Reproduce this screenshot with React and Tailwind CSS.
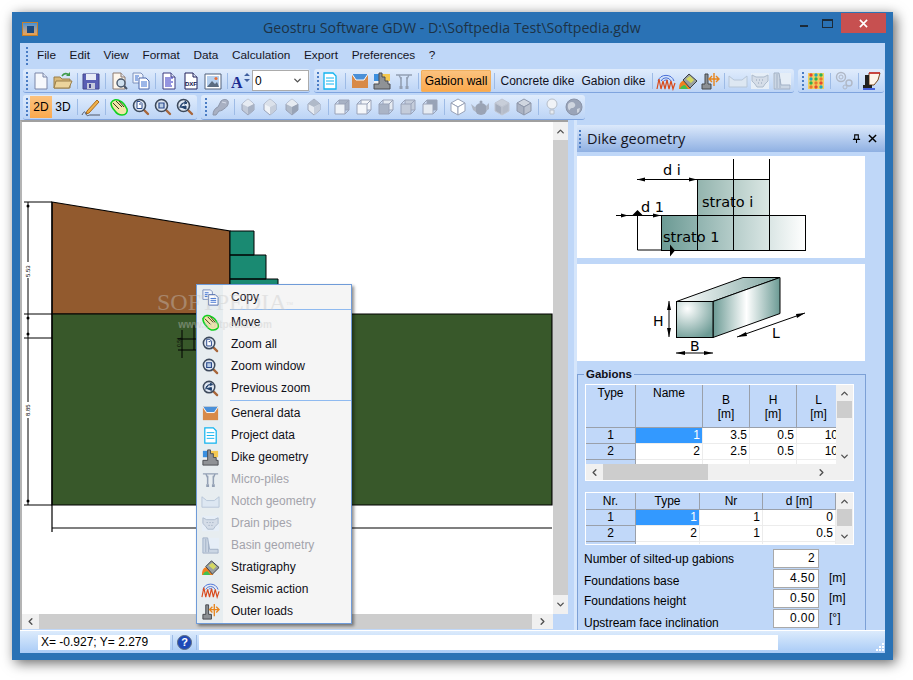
import React from "react";
import { ChevronUp, ChevronDown, ChevronLeft, ChevronRight } from "lucide-react";

const page = (inner, stroke = "#6a7fa8", fill = "#fff") => (
  <>
    <path d="M4 2h8l4 4v12H4z" fill={fill} stroke={stroke} />
    <path d="M12 2v4h4" fill="#dfe6f2" stroke={stroke} />
    {inner}
  </>
);

const zoomGlass = (inner) => (
  <>
    <path d="M12 12l5 5" stroke="#a8663a" strokeWidth="2.4" strokeLinecap="round" />
    <circle cx="8.5" cy="8.5" r="6" fill="#dfe7f2" stroke="#3d4a5c" strokeWidth="1.6" />
    {inner}
  </>
);

const cube = (top, left, right, stroke = "#9aa3b8") => (
  <>
    <path d="M10 2l7 4-7 4-7-4z" fill={top} stroke={stroke} />
    <path d="M3 6v8l7 4v-8z" fill={left} stroke={stroke} />
    <path d="M17 6v8l-7 4v-8z" fill={right} stroke={stroke} />
  </>
);

const box = (front, back, stroke = "#9aa3b8") => (
  <>
    <path d="M7 3h10v10H7z" fill={back} stroke={stroke} />
    <path d="M3 7h10v10H3z" fill={front} stroke={stroke} />
    <path d="M3 7l4-4M13 7l4-4M13 17l4-4" stroke={stroke} fill="none" />
  </>
);

const diamond = (a, b, c) => (
  <>
    <path d="M10 2l6 5v6l-6 5-6-5V7z" fill={a} stroke="#9aa3b8" />
    <path d="M10 10L4 7l6-5 6 5z" fill={b} />
    <path d="M10 10v8l6-5V7z" fill={c} />
  </>
);

const icons = {
  new: page(null, "#7a86a8", "#f6f8fc"),
  open: (
    <>
      <path d="M1 6h6l2 2h8v9H1z" fill="#d8b878" stroke="#9a7f4a" />
      <path d="M3 10h16l-3 7H1z" fill="#ecd49c" stroke="#9a7f4a" />
      <path d="M9 5c2-3 5-3 7-1" stroke="#3f9a4c" strokeWidth="1.6" fill="none" />
      <path d="M17 1v4h-4z" fill="#3f9a4c" />
    </>
  ),
  save: (
    <>
      <path d="M2 3h16v15H2z" fill="#5a5fb4" stroke="#44478c" />
      <path d="M5 3h10v6H5z" fill="#e8ebf6" />
      <path d="M6 12h8v6H6z" fill="#c6c9dc" />
      <path d="M8 13h2v4H8z" fill="#44478c" />
    </>
  ),
  preview: (
    <>
      {page(null, "#8c7a70", "#fdf6ec")}
      <circle cx="12" cy="12" r="4" fill="#cfe0ef" stroke="#48566a" strokeWidth="1.4" />
      <path d="M15 15l3 3" stroke="#48566a" strokeWidth="2" />
    </>
  ),
  copy: (
    <>
      <path d="M2 2h8l2 2v8H2z" fill="#f0f4fb" stroke="#7f92bc" />
      <path d="M8 7h7l3 3v8H8z" fill="#fff" stroke="#4c68ac" />
      <path d="M10 11h6M10 13h6M10 15h6M4 5h4M4 7h3M4 9h3" stroke="#3b6fd0" />
    </>
  ),
  text: page(<path d="M6 7h8M6 9h6M6 11h8M6 13h6M6 15h7" stroke="#2a2ac0" />, "#3a3a80"),
  dxf: page(
    <text x="10" y="15" textAnchor="middle" fontSize="6" fontWeight="700" fill="#10104a" fontFamily="Liberation Sans, sans-serif">
      DXF
    </text>,
    "#20205a"
  ),
  image: (
    <>
      <path d="M2 3h16v15H2z" fill="#fff" stroke="#50607a" />
      <path d="M4 5h12v11H4z" fill="#b6d0ee" />
      <path d="M4 16l5-6 3 3 2-2 2 5z" fill="#5c6c80" />
      <circle cx="13" cy="7.5" r="1.6" fill="#e8703a" />
    </>
  ),
  font: (
    <>
      <text x="0" y="17" fontSize="16" fontWeight="700" fill="#1c2c90" fontFamily="Liberation Serif, serif">
        A
      </text>
      <path d="M13 5l3-3 3 3zM13 8l3 3 3-3z" fill="#3f5f9f" />
    </>
  ),
  project: (
    <>
      <path d="M4 2h9l3 3v13H4z" fill="#fff" stroke="#12b4f0" strokeWidth="1.3" />
      <path d="M6 7h8M6 10h8M6 13h8" stroke="#12b4f0" />
    </>
  ),
  general: (
    <>
      <path d="M2 3h16v14H2z" fill="#d88a48" />
      <path d="M2 3h16l-4 6H6z" fill="#4a90d8" />
      <path d="M2 3l4 6h8l4-6" stroke="#fff" fill="none" />
    </>
  ),
  dike: (
    <>
      <path d="M2 3h8v7H2z" fill="#3a8fe0" />
      <path d="M10 3h8v7h-8z" fill="#f4c850" />
      <path d="M2 10h16v8H2z" fill="#f0f0f0" />
      <path d="M7 2h3v4h3v4h3v3h2v5H2v-5h5z" fill="#8f9296" stroke="#4a4d52" />
    </>
  ),
  micro: (
    <>
      <path d="M2 4h16M5 4l2 4M15 4l-2 4" stroke="#93a0b4" strokeWidth="1.4" fill="none" />
      <path d="M7 6v9M13 6v9" stroke="#93a0b4" strokeWidth="1.6" />
      <path d="M5.5 15h3v3h-3zM11.5 15h3v3h-3z" fill="#93a0b4" />
    </>
  ),
  seismic: (
    <>
      <path d="M2 10a8.500 8.500 0 0 1 16 0M5 10a5.500 5.500 0 0 1 10 0M8 10a2.500 2.500 0 0 1 4 0" stroke="#4a6fd8" fill="none" />
      <path d="M1 18l2-10 2 10 2-8 2 8 2-9 2 9 2-8 2 8 2-6" stroke="#d84a1c" strokeWidth="1.2" fill="none" />
    </>
  ),
  strat: (
    <>
      <path d="M1 18c0-6 2-8 6-9l6 9z" fill="#f08020" />
      <path d="M2 18c1-3 3-4 5-4l3 4z" fill="#40c050" />
      <path d="M5 9l6-6 8 7-7 7z" fill="#9aa0a0" stroke="#3c4044" />
      <path d="M8 8l4-3 4 4-3 3z" fill="#d4d860" />
    </>
  ),
  outer: (
    <>
      <path d="M5 3h3v10h3v5H2v-5h3z" fill="#8c9094" stroke="#44484c" />
      <path d="M10 8h8M12 5l-3 3 3 3M16 5l3 3-3 3M14 2v13" stroke="#e8851c" strokeWidth="1.4" fill="none" />
    </>
  ),
  notch: (
    <>
      <path d="M1 5l5 4h8l5-4v11H1z" fill="#dde7f2" stroke="#b7c6d8" />
    </>
  ),
  drain: (
    <>
      <path d="M1 2h18v16H1z" fill="#e6eef7" />
      <path d="M2 4l4 2h8l4-2v6l-3 3-2 3H7l-2-3-3-3z" fill="#d5dde8" stroke="#aebccd" />
      <path d="M6 9h1M9 9h1M12 9h1M8 12h1M11 12h1" stroke="#93a3b8" />
    </>
  ),
  basin: (
    <>
      <path d="M1 2h18v16H1z" fill="#e6eef7" />
      <path d="M2 2h5l2 12h9v4H2z" fill="#cbd6e4" stroke="#a2b1c6" />
      <path d="M5 3v14M8 8v9" stroke="#a2b1c6" />
    </>
  ),
  colors: (
    <>
      <path d="M2 2h16v16H2z" fill="#f0d060" />
      {[4, 8, 12, 16].map((y, r) =>
        [5, 10, 15].map((x, c) => (
          <circle key={`${x}-${y}`} cx={x} cy={y} r="1.7" fill={["#e84a30", "#20a8c0", "#30b050", "#e87830"][(r + c) % 4]} />
        ))
      )}
    </>
  ),
  pipes: (
    <>
      <circle cx="7" cy="6" r="4.500" fill="none" stroke="#b0b8c6" strokeWidth="1.4" />
      <circle cx="7" cy="6" r="2" fill="none" stroke="#b0b8c6" />
      <circle cx="15" cy="12" r="3" fill="none" stroke="#b0b8c6" strokeWidth="1.4" />
      <circle cx="11" cy="16" r="2" fill="none" stroke="#b0b8c6" />
    </>
  ),
  section: (
    <>
      <path d="M7 2h11l-2 7-4 5H7z" fill="#fdf4ea" stroke="#7a4a20" />
      <path d="M7 2h11" stroke="#d02020" strokeWidth="1.4" />
      <path d="M3 4h4v10H3z" fill="#202020" />
      <path d="M1 14h9v3H1z" fill="#202020" />
      <path d="M1 18h12" stroke="#1030d0" strokeWidth="1.4" />
    </>
  ),
  pencil: (
    <>
      <path d="M6 14L16 3l2 2L8 16l-3 1z" fill="#f0b048" stroke="#a86c20" />
      <path d="M1 18c2-4 3-4 4-1s3 1 4 1h10" stroke="#50586a" fill="none" />
    </>
  ),
  hand: (
    <>
      <path d="M2 6c2-4 6-4 9-2 3 1 5 4 7 8 1 3-1 6-5 6-3 0-5-1-7-4-2-2-4-5-4-8z" fill="#f2e6a8" stroke="#10d020" strokeWidth="1.6" />
      <path d="M4 6l6 6M7 4l6 6M10 4l5 6" stroke="#3a3a20" />
    </>
  ),
  zoomAll: zoomGlass(
    <>
      <path d="M6 4.500h3l2 2v5H6z" fill="#fff" stroke="#2a4a8c" />
      <path d="M8 7h2" stroke="#2a4a8c" />
    </>
  ),
  zoomWin: zoomGlass(<path d="M6 6h5v5H6z" fill="#b9cde4" stroke="#2a4a8c" strokeWidth="1.2" />),
  zoomPrev: zoomGlass(<path d="M5 11c0-4 3-6 7-5l-2-2M12 6l-3 1M6 10l5-1v3z" fill="#20406c" stroke="#20406c" />),
  run: (
    <>
      <path d="M3 18c0-4 2-7 5-8l3-6c2-2 6-2 7 0 1 3-1 6-3 7-2 2-4 3-6 3l-3 4z" fill="#a8b0c2" stroke="#8d96aa" />
      <path d="M12 5l4 1" stroke="#d8deea" />
    </>
  ),
  iso1: diamond("#c2cad8", "#e6ebf2", "#a8b2c4"),
  iso2: diamond("#f0f3f7", "#dbe1ea", "#c6cedb"),
  iso3: diamond("#b0bac9", "#e6ebf2", "#98a3b6"),
  iso4: diamond("#e6ebf2", "#b0bac9", "#c6cedb"),
  box1: box("#eef2f7", "#a8b2c4"),
  box2: box("#f4f6fa", "#f4f6fa"),
  box3: box("#aab4c6", "#e6ebf2"),
  box4: box("#c4ccda", "#c4ccda"),
  box5: box("#e6ebf2", "#98a3b6"),
  wire: cube("#fff", "#fff", "#fff"),
  teapot: (
    <>
      <circle cx="11" cy="12" r="6" fill="#9aa3b4" />
      <path d="M6 11L1 7l2 6 3 2zM16 9l3-3v6l-3 2z" fill="#aeb6c5" />
      <circle cx="11" cy="5" r="1.500" fill="#9aa3b4" />
    </>
  ),
  solid: cube("#c8ced9", "#a5adbc", "#b5bcc9", "#c0c6d2"),
  cubeGrey: cube("#d0d6e0", "#aab2c2", "#bcc3d0", "#8f98ab"),
  bulb: (
    <>
      <circle cx="10" cy="7" r="5" fill="#f0f3f7" stroke="#b6bec9" />
      <path d="M8 13h4v4H8z" fill="#e6ebf2" stroke="#b6bec9" />
    </>
  ),
  globe: (
    <>
      <circle cx="10" cy="10" r="8" fill="#9aa4b8" stroke="#8a94a8" />
      <path d="M5 6c3-2 5-1 6 1s-1 4-3 4-2 3-3 2-2-5 0-7zM13 12l3-1-1 4-2 1z" fill="#cfd5df" />
    </>
  ),
};

function Icon({ name, className = "w-[20px] h-[20px]" }) {
  return (
    <svg viewBox="0 0 20 20" className={className}>
      {icons[name]}
    </svg>
  );
}

function Grip() {
  return (
    <div className="flex flex-col gap-[2px] w-[2px]">
      {[0, 1, 2, 3, 4].map((i) => (
        <div key={i} className="w-[2px] h-[2px] bg-[#4a7cc4]" />
      ))}
    </div>
  );
}

function Sep({ className = "w-[6px]" }) {
  return (
    <div className={`h-full flex items-center justify-center ${className}`}>
      <div className="w-[1px] h-[16px] bg-[#f4f8fe] border-l border-[#9dbbe6]" />
    </div>
  );
}

function Btn({ icon }) {
  return (
    <div className="w-[22px] h-full flex items-center justify-center">
      <Icon name={icon} />
    </div>
  );
}

function Band({ className, children }) {
  return (
    <div
      className={`flex items-center h-full rounded-[3px] border-b border-[#7fa4de] bg-gradient-to-b from-[#e0ecfc] to-[#bcd4f6] ${className}`}
    >
      {children}
    </div>
  );
}

const menuBar = ["File", "Edit", "View", "Format", "Data", "Calculation", "Export", "Preferences", "?"];

function Toolbars() {
  return (
    <>
      <div className="h-[26px] shrink-0 flex items-center pl-[6px] text-[11.8px] text-[#15151f]">
        <Grip />
        <div className="flex gap-[13.6px] ml-[9px]">
          {menuBar.map((label) => (
            <span key={label}>{label}</span>
          ))}
        </div>
      </div>
      <div className="h-[24px] shrink-0 flex items-center pl-[3px]">
        <Band className="w-[287px] pl-[7px]">
          <div className="w-0 -ml-[4px] mr-[4px]">
            <Grip />
          </div>
          <Btn icon="new" />
          <Btn icon="open" />
          <Sep />
          <Btn icon="save" />
          <Sep />
          <Btn icon="preview" />
          <Btn icon="copy" />
          <Sep />
          <Btn icon="text" />
          <Btn icon="dxf" />
          <Btn icon="image" />
          <Sep />
          <Btn icon="font" />
          <div className="w-[57px] h-[21px] bg-white border border-[#ababab] flex items-center justify-between pl-[2px] pr-[5px] text-[12px]">
            <span>0</span>
            <ChevronDown size={11} strokeWidth={3} className="text-[#505050]" />
          </div>
        </Band>
        <Band className="w-[480px] ml-[4px] pl-[5px]">
          <div className="w-0 -ml-[2px] mr-[2px]">
            <Grip />
          </div>
          <Btn icon="project" />
          <Sep className="w-[8px]" />
          <Btn icon="general" />
          <Btn icon="dike" />
          <Btn icon="micro" />
          <Sep />
          <div className="w-[70px] h-[22px] flex items-center justify-center text-[12px] rounded-[1px] border border-[#f0b060] bg-gradient-to-b from-[#fbc27e] to-[#fba94c]">
            Gabion wall
          </div>
          <Sep />
          <div className="w-[81px] text-center text-[12px] text-[#101020]">Concrete dike</div>
          <div className="w-[71px] text-center text-[12px] text-[#101020]">Gabion dike</div>
          <Sep />
          <Btn icon="seismic" />
          <Btn icon="strat" />
          <Btn icon="outer" />
          <Sep />
          <Btn icon="notch" />
          <Btn icon="drain" />
          <Btn icon="basin" />
        </Band>
        <Band className="w-[86px] ml-[4px] pl-[7px]">
          <div className="w-0 -ml-[3px] mr-[3px]">
            <Grip />
          </div>
          <Btn icon="colors" />
          <Sep />
          <Btn icon="pipes" />
          <Sep />
          <Btn icon="section" />
        </Band>
      </div>
      <div className="h-[25px] shrink-0 mt-[2px] flex items-center pl-[3px]">
        <Band className="w-[174px] pl-[7px]">
          <div className="w-0 -ml-[4px] mr-[4px]">
            <Grip />
          </div>
          <div className="w-[22px] h-[22px] flex items-center justify-center text-[12px] bg-gradient-to-b from-[#fbc27e] to-[#fba94c]">2D</div>
          <div className="w-[22px] text-center text-[12px]">3D</div>
          <Sep />
          <Btn icon="pencil" />
          <Sep />
          <Btn icon="hand" />
          <Btn icon="zoomAll" />
          <Btn icon="zoomWin" />
          <Btn icon="zoomPrev" />
        </Band>
        <Band className="w-[384px] ml-[4px] pl-[8px]">
          <div className="w-0 -ml-[4px] mr-[4px]">
            <Grip />
          </div>
          <Btn icon="run" />
          <Sep />
          <Btn icon="iso1" />
          <Btn icon="iso2" />
          <Btn icon="iso3" />
          <Btn icon="iso4" />
          <Sep />
          <Btn icon="box1" />
          <Btn icon="box2" />
          <Btn icon="box3" />
          <Btn icon="box4" />
          <Btn icon="box5" />
          <Sep />
          <Btn icon="wire" />
          <Btn icon="teapot" />
          <Btn icon="solid" />
          <Btn icon="cubeGrey" />
          <Sep />
          <Btn icon="bulb" />
          <Btn icon="globe" />
        </Band>
      </div>
    </>
  );
}

// section of the dike, drawn in screen coordinates
function DikeCanvas() {
  return (
    <svg viewBox="22 122 531 492" className="w-[531px] h-[492px] block bg-white">
      <path d="M52 202L230 231V314H52z" fill="#925a2e" stroke="#000" strokeWidth="1.2" />
      <path d="M52 314H552V505H52z" fill="#38582a" stroke="#000" strokeWidth="1.2" />
      <path d="M230 231h24v24h-24zM230 255h36v24h-36zM230 279h48v35h-48z" fill="#1a8a72" stroke="#000" strokeWidth="1" />
      <path d="M52 202V532M52 528H552" stroke="#000" strokeWidth="1.2" fill="none" />
      <path d="M28 202V505M24 202H52M24 314H52M24 338H52M24 505H52" stroke="#000" fill="none" />
      <circle cx="28" cy="206" r="1.500" />
      <circle cx="28" cy="318" r="1.500" />
      <circle cx="28" cy="334" r="1.500" />
      <circle cx="28" cy="501" r="1.500" />
      <rect x="25" y="262" width="6" height="16" fill="#fff" />
      <text x="0" y="0" fontSize="6" transform="translate(30 277) rotate(-90)" fontFamily="Liberation Sans, sans-serif">
        5.53
      </text>
      <rect x="25" y="402" width="6" height="16" fill="#fff" />
      <text x="0" y="0" fontSize="6" transform="translate(30 416) rotate(-90)" fontFamily="Liberation Sans, sans-serif">
        8.85
      </text>
      <path d="M182 330V358M194 325V350M178 339H197M178 350H197" stroke="#000" fill="none" />
      <text x="0" y="0" fontSize="5" fill="#000" transform="translate(181 347) rotate(-90)" fontFamily="Liberation Sans, sans-serif">
        0.51
      </text>
    </svg>
  );
}

function Arrow({ dir }) {
  const props = { size: 11, strokeWidth: 3, className: "text-[#505050]" };
  if (dir === "up") return <ChevronUp {...props} />;
  if (dir === "down") return <ChevronDown {...props} />;
  if (dir === "left") return <ChevronLeft {...props} />;
  return <ChevronRight {...props} />;
}

function GeometrySketch() {
  return (
    <svg viewBox="577 156 288 102" className="w-[288px] h-[102px] block bg-white">
      <defs>
        <linearGradient id="lowerRow" x1="0" x2="1" y1="0" y2="0">
          <stop offset="0" stopColor="#6b9a94" />
          <stop offset="1" stopColor="#ffffff" />
        </linearGradient>
        <linearGradient id="upperRow" x1="0" x2="1" y1="0" y2="0">
          <stop offset="0" stopColor="#93b4ae" />
          <stop offset="1" stopColor="#dbe7e4" />
        </linearGradient>
      </defs>
      <rect x="661.500" y="215.500" width="144" height="35" fill="url(#lowerRow)" stroke="#000" />
      <rect x="697.500" y="179.500" width="72" height="36" fill="url(#upperRow)" stroke="#000" />
      <path d="M697.500 215v36M733.500 159v92M769.500 159v92M616 215.500h45M637 179.500h60M637.500 215v35h24" stroke="#000" fill="none" />
      <path d="M637 179.500l8-2v4zM697 179.500l-8-2v4zM628 215.500l-7-2v4zM661 215.500l-8-2v4z" />
      <path d="M637.500 210l5 5h-10zM675 250.500l-5-6v12z" />
      <g fontFamily="DejaVu Sans, sans-serif" fontSize="14.5" fill="#000">
        <text x="663" y="175">d i</text>
        <text x="641" y="212">d 1</text>
        <text x="702" y="207">strato i</text>
        <text x="663" y="241.500">strato 1</text>
      </g>
    </svg>
  );
}

function BlockSketch() {
  return (
    <svg viewBox="577 264 288 97" className="w-[288px] h-[97px] block bg-white mt-[6px]">
      <defs>
        <radialGradient id="frontFace" cx="0.300" cy="0.200" r="0.900">
          <stop offset="0" stopColor="#ffffff" />
          <stop offset="1" stopColor="#6b9a94" />
        </radialGradient>
        <linearGradient id="sideFace" x1="0" x2="1" y1="0" y2="0">
          <stop offset="0" stopColor="#6b9a94" />
          <stop offset="0.500" stopColor="#ffffff" />
          <stop offset="1" stopColor="#6b9a94" />
        </linearGradient>
        <linearGradient id="topFace" x1="0" x2="1" y1="0" y2="0">
          <stop offset="0" stopColor="#ffffff" />
          <stop offset="1" stopColor="#7ea5a0" />
        </linearGradient>
      </defs>
      <path d="M676.500 301.500L743 277.500H780L713 301.500z" fill="url(#topFace)" stroke="#000" />
      <path d="M713 301.500L780 277.500V313.500L713 337.500z" fill="url(#sideFace)" stroke="#000" />
      <rect x="676.500" y="301.500" width="36.500" height="36" fill="url(#frontFace)" stroke="#000" />
      <path d="M669 301v36M676 353h37M737 337l68-24" stroke="#000" fill="none" />
      <path d="M669 301l-2 9h4zM669 337l-2-9h4zM676 353l9-2v4zM713 353l-9-2v4zM737 337l9-5 1 4zM805 313l-9 1 1 4z" />
      <g fontFamily="DejaVu Sans, sans-serif" fontSize="14" fill="#000">
        <text x="653" y="326">H</text>
        <text x="690" y="351">B</text>
        <text x="772" y="337.500">L</text>
      </g>
    </svg>
  );
}

function HeadCell({ className = "", children }) {
  return (
    <div className={`shrink-0 bg-[#c1d8f9] border-r border-b border-[#9aa0aa] text-center leading-[14px] ${className}`}>{children}</div>
  );
}

function DataCell({ width, selected, children }) {
  return (
    <div
      className={`shrink-0 h-[16px] border-r border-b border-[#ececec] text-right pr-[2px] leading-[15px] ${width} ${
        selected ? "bg-[#3399ff] text-white" : "bg-white"
      }`}
    >
      {children}
    </div>
  );
}

function VScroll({ thumb, spacer }) {
  return (
    <div className="w-[17px] h-full bg-[#f0f0f0] flex flex-col items-center">
      <div className="h-[16px] flex items-center">
        <Arrow dir="up" />
      </div>
      <div className={`w-[15px] bg-[#cdcdcd] ${thumb}`} />
      <div className={spacer} />
      <div className="h-[16px] flex items-center">
        <Arrow dir="down" />
      </div>
    </div>
  );
}

function GabionTable() {
  const rows = [
    ["1", "1", "3.5", "0.5", "10"],
    ["2", "2", "2.5", "0.5", "10"],
  ];
  return (
    <div className="w-[269px] h-[97px] bg-white p-[1px] text-[12px]">
      <div className="flex h-[79px]">
        <div className="w-[250px] h-[79px] overflow-hidden">
          <div className="flex h-[43px]">
            <HeadCell className="w-[50px] pt-[1px]">Type</HeadCell>
            <HeadCell className="w-[67px] pt-[1px]">Name</HeadCell>
            <HeadCell className="w-[47px] pt-[8px]">B<br />[m]</HeadCell>
            <HeadCell className="w-[47px] pt-[8px]">H<br />[m]</HeadCell>
            <HeadCell className="w-[44px] pt-[8px]">L<br />[m]</HeadCell>
          </div>
          {rows.map((r) => (
            <div key={r[0]} className="flex">
              <HeadCell className="w-[50px] h-[16px]">{r[0]}</HeadCell>
              <DataCell width="w-[67px]" selected={r[0] === "1"}>{r[1]}</DataCell>
              <DataCell width="w-[47px]">{r[2]}</DataCell>
              <DataCell width="w-[47px]">{r[3]}</DataCell>
              <DataCell width="w-[44px]">{r[4]}</DataCell>
            </div>
          ))}
          <div className="flex">
            <HeadCell className="w-[50px] h-[16px]" />
            <DataCell width="w-[67px]" />
            <DataCell width="w-[47px]" />
            <DataCell width="w-[47px]" />
            <DataCell width="w-[44px]" />
          </div>
        </div>
        <VScroll thumb="h-[17px]" spacer="h-[30px]" />
      </div>
      <div className="h-[16px] bg-[#f0f0f0] flex items-center w-[267px]">
        <div className="w-[17px] flex justify-center">
          <Arrow dir="left" />
        </div>
        <div className="w-[105px] h-[16px] bg-[#cdcdcd]" />
        <div className="w-[105px]" />
        <div className="w-[17px] flex justify-center">
          <Arrow dir="right" />
        </div>
      </div>
    </div>
  );
}

function LayerTable() {
  const rows = [
    ["1", "1", "1", "0"],
    ["2", "2", "1", "0.5"],
  ];
  return (
    <div className="w-[269px] h-[53px] bg-white p-[1px] text-[12px] mt-[11px] flex">
      <div className="w-[250px] h-[51px] overflow-hidden">
        <div className="flex h-[17px]">
          <HeadCell className="w-[50px] pt-[1px]">Nr.</HeadCell>
          <HeadCell className="w-[64px] pt-[1px]">Type</HeadCell>
          <HeadCell className="w-[63px] pt-[1px]">Nr</HeadCell>
          <HeadCell className="w-[73px] pt-[1px]">d [m]</HeadCell>
        </div>
        {rows.map((r) => (
          <div key={r[0]} className="flex">
            <HeadCell className="w-[50px] h-[16px]">{r[0]}</HeadCell>
            <DataCell width="w-[64px]" selected={r[0] === "1"}>{r[1]}</DataCell>
            <DataCell width="w-[63px]">{r[2]}</DataCell>
            <DataCell width="w-[73px]">{r[3]}</DataCell>
          </div>
        ))}
        <div className="flex">
          <HeadCell className="w-[50px] h-[16px]" />
          <DataCell width="w-[64px]" />
          <DataCell width="w-[63px]" />
          <DataCell width="w-[73px]" />
        </div>
      </div>
      <VScroll thumb="h-[17px]" spacer="h-[2px]" />
    </div>
  );
}

// labels sit a little lower than their input boxes in the original
const formRows = [
  ["Number of silted-up gabions", "2", "", "pt-[2px]"],
  ["Foundations base", "4.50", "[m]", "pt-[6px]"],
  ["Foundations height", "0.50", "[m]", "pt-[6px]"],
  ["Upstream face inclination", "0.00", "[°]", "pt-[10px]"],
];

function Panel() {
  return (
    <div className="w-[311px] h-[510px] border-l-[3px] border-[#d6e6fb] flex flex-col overflow-hidden">
      <div className="h-[27px] mt-[5px] shrink-0 flex items-center bg-gradient-to-b from-[#dce9fb] to-[#8fb0e2] pl-[2px] pr-[8px]">
        <Grip />
        <span className="ml-[6px] text-[14.5px] text-[#15151f] font-['Open_Sans',sans-serif]">Dike geometry</span>
        <svg viewBox="0 0 10 10" className="w-[9px] h-[9px] ml-auto">
          <path d="M3 1h4v5H3zM1 6h8M5 6v4" stroke="#000" fill="none" strokeWidth="1.2" />
        </svg>
        <svg viewBox="0 0 10 10" className="w-[9px] h-[9px] ml-[7px]">
          <path d="M1 1l8 8M9 1l-8 8" stroke="#000" strokeWidth="1.6" />
        </svg>
      </div>
      <div className="mt-[4px] shrink-0">
        <GeometrySketch />
        <BlockSketch />
      </div>
      <div className="relative mt-[13px] w-[289px] h-[260px] shrink-0 border border-b-0 border-[#7ca0d6] pl-[7px] pt-[3px] text-[12px]">
        <span className="absolute -top-[7px] left-[6px] px-[2px] bg-[#bfd7f8] font-bold text-[11.500px] leading-[13px] text-[#101018]">Gabions</span>
        <div className="mt-[6px]">
          <GabionTable />
          <LayerTable />
        </div>
        <div className="-ml-[1px] mt-[3px] flex flex-col">
          {formRows.map(([label, value, unit, offset]) => (
            <div key={label} className="flex items-center h-[20px]">
              <span className={`w-[189px] ${offset}`}>{label}</span>
              <div className="w-[46px] h-[19px] bg-white border border-[#a9a9a9] text-right leading-[17px] tracking-[0.4px] pr-[3px]">{value}</div>
              <span className="ml-[10px]">{unit}</span>
            </div>
          ))}
        </div>
      </div>
    </div>
  );
}

const menuItems = [
  { label: "Copy", icon: "copy" },
  { sep: true },
  { label: "Move", icon: "hand" },
  { label: "Zoom all", icon: "zoomAll" },
  { label: "Zoom window", icon: "zoomWin" },
  { label: "Previous zoom", icon: "zoomPrev" },
  { sep: true },
  { label: "General data", icon: "general" },
  { label: "Project data", icon: "project" },
  { label: "Dike geometry", icon: "dike" },
  { label: "Micro-piles", icon: "micro", disabled: true },
  { label: "Notch geometry", icon: "notch", disabled: true },
  { label: "Drain pipes", icon: "drain", disabled: true },
  { label: "Basin geometry", icon: "basin", disabled: true },
  { label: "Stratigraphy", icon: "strat" },
  { label: "Seismic action", icon: "seismic" },
  { label: "Outer loads", icon: "outer" },
];

function ContextMenu() {
  return (
    <div className="absolute left-[184px] top-[272px] w-[156px] h-[340px] bg-[#f5f5f5] border border-[#6f9bd8] shadow-[2px_2px_3px_rgba(0,0,0,0.45)] text-[12px] flex flex-col pt-[1px]">
      <div className="absolute left-0 top-0 bottom-0 w-[26px] bg-[#e7edf0]" />
      {menuItems.map((item, i) =>
        item.sep ? (
          <div key={i} className="relative h-[3px] shrink-0 flex items-center">
            <div className="ml-[33px] h-[1px] flex-1 bg-[#8fbaf0]" />
          </div>
        ) : (
          <div key={item.label} className={`relative h-[22px] shrink-0 flex items-center ${item.disabled ? "text-[#a3a3ab]" : "text-[#101018]"}`}>
            <div className="w-[26px] flex justify-center">
              <Icon name={item.icon} className="w-[19px] h-[19px]" />
            </div>
            <span className="ml-[8px]">{item.label}</span>
          </div>
        )
      )}
    </div>
  );
}

function Watermark() {
  return (
    <div className="absolute left-[145px] top-[276px] opacity-40 pointer-events-none text-center text-[#c8c8c8]">
      <div className="font-['Liberation_Serif',serif] text-[24px] leading-[28px]">
        SOFTPEDIA<sup className="text-[7px]">™</sup>
      </div>
      <div className="mt-[3px] font-['Liberation_Sans',sans-serif] text-[10px] leading-[12px] font-bold">www.softpedia.com</div>
    </div>
  );
}

function StatusBar() {
  return (
    <div className="h-[23px] shrink-0 border-t border-white flex items-center bg-gradient-to-b from-[#dcebfc] to-[#a9cbf6] relative">
      <div className="w-[18px]" />
      <div className="w-[132px] h-[15px] bg-white text-[12px] leading-[15px] pl-[3px]">X= -0.927; Y= 2.279</div>
      <div className="w-[2px]" />
      <div className="w-[1px] h-[15px] bg-[#9dbbe6]" />
      <div className="w-[23px] flex justify-center">
        <div className="w-[15px] h-[15px] rounded-full bg-[#1e48b8] border border-[#5a6a80] text-white font-bold text-[11px] leading-[13px] text-center">?</div>
      </div>
      <div className="w-[1px] h-[15px] bg-[#9dbbe6]" />
      <div className="w-[2px]" />
      <div className="w-[579px] h-[15px] bg-white" />
      <div className="absolute right-[1px] bottom-[2px] grid grid-cols-3 gap-[1px]">
        {[0, 1, 2, 3, 4, 5, 6, 7, 8].map((i) => (
          <div key={i} className={`w-[2px] h-[2px] ${[0, 1, 3].includes(i) ? "bg-transparent" : "bg-white"}`} />
        ))}
      </div>
    </div>
  );
}

export default function App() {
  return (
    <div className="w-[913px] h-[680px] bg-white pl-[12px] pt-[12px] overflow-hidden font-['Liberation_Sans',sans-serif]">
      <div className="relative w-[881px] h-[648px] bg-[#2a72b5] shadow-[3px_3px_12px_rgba(0,0,0,0.6)] flex flex-col">
        <div className="h-[31px] shrink-0 flex items-start relative">
          <div className="ml-[10px] mt-[10px] w-[16px] h-[14px] bg-gradient-to-b from-[#3a8fd8] to-[#f0a040] border border-[#c08030] flex items-center justify-center">
            <div className="w-[7px] h-[7px] bg-[#1a4a80]" />
          </div>
          <span className="ml-[225px] mt-[6px] text-[14.2px] leading-[20px] text-[#1d3246] font-['Open_Sans',sans-serif]">
            Geostru Software GDW - D:\Softpedia Test\Softpedia.gdw
          </span>
          <div className="ml-auto mr-[7px] mt-[1px] flex items-start">
            <div className="w-[8px] h-[2px] bg-[#1b2b3a] mt-[12px] mr-[14px]" />
            <div className="w-[11px] h-[9px] border border-[#1b2b3a] border-t-2 mt-[6px] mr-[8px]" />
            <div className="w-[45px] h-[20px] bg-[#c75050] flex items-center justify-center">
              <svg viewBox="0 0 10 10" className="w-[9px] h-[9px]">
                <path d="M1 1l8 8M9 1l-8 8" stroke="#fff" strokeWidth="1.8" />
              </svg>
            </div>
          </div>
        </div>
        <div className="mx-[8px] w-[865px] h-[610px] shrink-0 bg-[#bfd7f8] flex flex-col">
          <Toolbars />
          <div className="flex h-[510px] shrink-0">
            <div className="w-[548px] h-[510px] border-t-2 border-l-2 border-[#a0a0a0] border-l-[#b4b4b4] shrink-0">
              <div className="flex">
                <DikeCanvas />
                <div className="w-[15px] h-[492px] bg-[#f0f0f0] flex flex-col items-center">
                  <div className="h-[18px] flex items-center">
                    <Arrow dir="up" />
                  </div>
                  <div className="w-[15px] h-[455px] bg-[#cdcdcd]" />
                  <div className="h-[19px] flex items-center">
                    <Arrow dir="down" />
                  </div>
                </div>
              </div>
              <div className="h-[15px] bg-[#f0f0f0] flex items-center w-[531px]">
                <div className="w-[17px] flex justify-center">
                  <Arrow dir="left" />
                </div>
                <div className="w-[493px] h-[15px] bg-[#cdcdcd]" />
                <div className="w-[21px] flex justify-center">
                  <Arrow dir="right" />
                </div>
              </div>
            </div>
            <div className="w-[6px] shrink-0" />
            <Panel />
          </div>
          <StatusBar />
        </div>
        <ContextMenu />
        <Watermark />
      </div>
    </div>
  );
}
